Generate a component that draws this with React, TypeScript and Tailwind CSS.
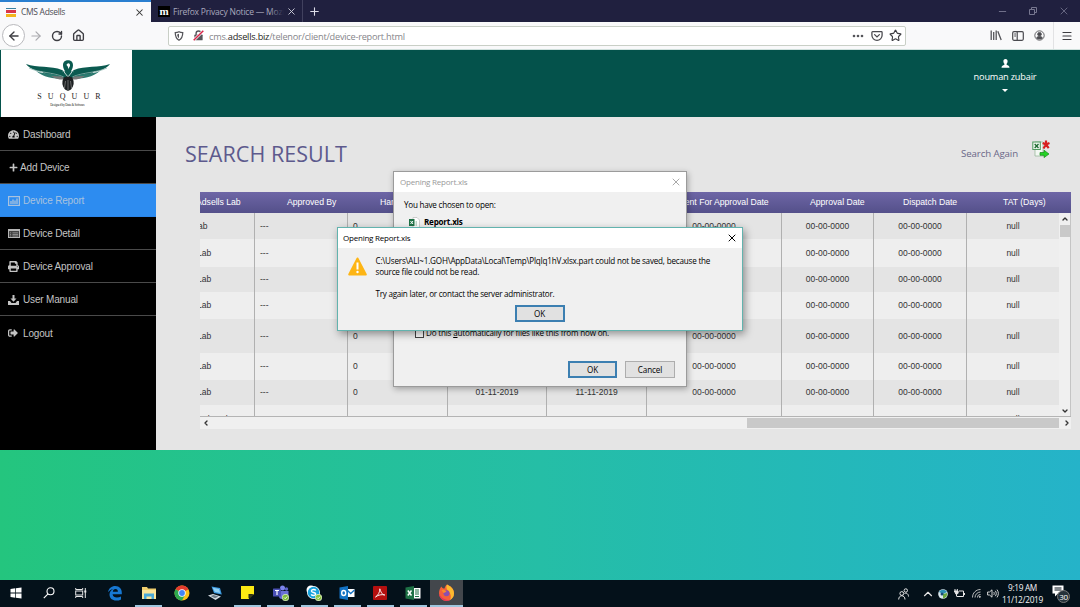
import React from "react";
import {
  ArrowLeft,
  ArrowRight,
  RotateCw,
  House,
  X,
  Plus,
  Star,
  Menu,
  Minus,
  ChevronUp,
  ChevronDown,
  ChevronLeft,
  ChevronRight,
} from "lucide-react";
import { FaTachometerAlt, FaPlus, FaSignOutAlt, FaPrint } from "react-icons/fa";

const arial = "font-['Liberation_Sans',Arial,sans-serif]";
const segoe = "font-['Open_Sans','Noto_Sans',sans-serif]";

/* ---------- Browser chrome ---------- */

function TabBar() {
  return (
    <div className="flex h-[22px] shrink-0 bg-[#20203f]">
      <div className="flex w-[151px] items-center border-t-2 border-[#2a7fd0] bg-[#f9f9fb] pl-[6px] pr-[6px]">
        <div className="flex h-[9px] w-[10px] flex-col gap-px">
          <span className="h-[2px] bg-[#3a7fa0]" />
          <span className="h-[3px] bg-[#d9364a]" />
          <span className="h-[3px] bg-[#f2b51c]" />
        </div>
        <span className="ml-[5px] mt-px flex-1 whitespace-nowrap text-[8.5px] tracking-[-0.32px] text-[#4c4c55]">CMS Adsells</span>
        <X className="size-[11px] text-[#333]" strokeWidth={2.2} />
      </div>
      <div className="flex w-[152px] items-center border-r border-[#41415e] pl-[7px] pr-[5px]">
        <span className="flex h-[11px] w-[12px] items-center justify-center bg-black font-['Liberation_Serif',serif] text-[11px] font-bold leading-[10px] text-white">m</span>
        <span className="relative ml-[3px] mt-[2px] w-[111px] overflow-hidden whitespace-nowrap text-[8.5px] tracking-[-0.2px] text-[#a9a9bd]">
          Firefox Privacy Notice — Mozil
          <span className="absolute right-0 top-0 h-full w-[14px] bg-linear-to-r from-transparent to-[#20203f]" />
        </span>
        <span className="flex-1" />
        <X className="size-[11px] text-[#d0d0dc]" strokeWidth={2} />
      </div>
      <div className="flex w-[22px] items-center justify-center">
        <Plus className="size-[13px] text-[#dddde8]" strokeWidth={2} />
      </div>
      <div className="ml-auto flex items-center gap-[21px] pr-[10px] text-[#777790]">
        <Minus className="size-[11px]" strokeWidth={2} />
        <svg className="size-[8px]" viewBox="0 0 8 8" fill="none" stroke="currentColor">
          <path d="M.5 2.500h5v5h-5zM2.500 2.500v-2h5v5h-2" />
        </svg>
        <X className="size-[12px]" strokeWidth={1.6} />
      </div>
    </div>
  );
}

function Toolbar() {
  return (
    <div className="flex h-[28px] shrink-0 items-center border-b border-[#cfe0dc] bg-[#f9f9fa] text-[#3d3d42]">
      <div className="ml-[2px] flex size-[23px] items-center justify-center rounded-full border border-[#b9b9bd] bg-white">
        <ArrowLeft className="size-[14px]" strokeWidth={2.3} />
      </div>
      <ArrowRight className="ml-[4px] size-[14px] text-[#aaaaae]" strokeWidth={2} />
      <RotateCw className="ml-[8px] size-[12px]" strokeWidth={2.8} />
      <House className="ml-[9px] size-[13px]" strokeWidth={2.5} />
      <div className="ml-[83px] flex h-[20px] w-[738px] items-center rounded-[2px] border border-[#c9cfc6] bg-white">
        <svg className="ml-[5px] size-[10px]" viewBox="0 0 16 16" fill="none" stroke="#55555a" strokeWidth="2">
          <path d="M8 1.2c2 1 4 1.3 6 1.3 0 6-1.500 10-6 12.300C3.500 12.500 2 8.500 2 2.500c2 0 4-.300 6-1.300z" />
          <path d="M8 4.500v7c-2-1.500-2.800-3.500-3-6z" fill="#55555a" stroke="none" />
        </svg>
        <svg className="ml-[9px] size-[11px]" viewBox="0 0 16 16" fill="none">
          <rect x="2" y="6.500" width="12" height="8.500" rx="1" fill="#55555a" />
          <path d="M4.500 7V5a3.500 3.500 0 0 1 7 0v2" stroke="#55555a" strokeWidth="2" />
          <path d="M1 15L15 1" stroke="#fff" strokeWidth="4" />
          <path d="M1 15L15 1" stroke="#d7264a" strokeWidth="2.200" />
        </svg>
        <span className="ml-[5px] mt-[2px] flex-1 whitespace-nowrap text-[9.2px] tracking-[-0.23px] text-[#85858a]">
          cms.<span className="text-[#1c1c20]">adsells.biz</span>/telenor/client/device-report.html
        </span>
        <svg className="h-[4px] w-[12px]" viewBox="0 0 12 4" fill="#55555a">
          <circle cx="2" cy="2" r="1.300" />
          <circle cx="6" cy="2" r="1.300" />
          <circle cx="10" cy="2" r="1.300" />
        </svg>
        <svg className="ml-[7px] size-[12px]" viewBox="0 0 16 16" fill="none" stroke="#4a4a4f" strokeWidth="1.700">
          <path d="M2.200 2.200h11.600a1 1 0 0 1 1 1V7a6.800 6.800 0 0 1-13.600 0V3.200a1 1 0 0 1 1-1z" />
          <path d="M4.800 6.200L8 9.300l3.200-3.100" strokeLinecap="round" />
        </svg>
        <Star className="ml-[6px] mr-[3px] size-[13px]" strokeWidth={2.1} />
      </div>
      <svg className="ml-[84px] h-[11px] w-[12px]" viewBox="0 0 12 11" fill="none" stroke="#55555a" strokeWidth="1.300">
        <path d="M1.200 .5v9.500M3.700 2v8M6.200 .5v9.500M7.800 1.200l3.400 8.800" />
      </svg>
      <svg className="ml-[10px] h-[10px] w-[12px]" viewBox="0 0 12 10" fill="none" stroke="#4a4a4f" strokeWidth="1.200">
        <rect x=".7" y=".7" width="10.600" height="8.600" rx="1.200" />
        <path d="M5.200 1v8M2.200 3h1.800M2.200 5h1.800" />
      </svg>
      <svg className="ml-[10px] size-[11px]" viewBox="0 0 12 12" fill="none" stroke="#55555a" strokeWidth="1">
        <circle cx="6" cy="6" r="5.100" />
        <circle cx="6" cy="4.600" r="2" fill="#4a4a4f" />
        <path d="M2.800 8.600c1-2 5.400-2 6.400 0C8 10.300 4 10.300 2.800 8.600z" fill="#4a4a4f" />
      </svg>
      <div className="ml-[8px] h-[27px] w-px bg-[#e2e2e4]" />
      <Menu className="ml-[7px] size-[12px]" strokeWidth={2.4} />
    </div>
  );
}

/* ---------- Page ---------- */

function Logo() {
  return (
    <div className="ml-px flex h-[67px] w-[131px] flex-col items-center bg-white pt-[10px]">
      <svg className="ml-[3px] h-[31px] w-[86px]" viewBox="0 0 86 31">
        <path d="M1 4C12 8 26 5.500 37 10l3 8C31 18 21 15.500 17 11.500 10 11 4 8 1 4z" fill="#0b5a50" />
        <path d="M85 4C74 8 60 5.500 49 10l-3 8c9 0 19-2.500 23-6.500C76 11 82 8 85 4z" fill="#0b5a50" />
        <path d="M4 8c11 5 23 4 35 9M82 8c-11 5-23 4-35 9" stroke="#8fb5af" strokeWidth=".8" fill="none" />
        <path d="M11 11c7 6 17 8 28 8-2-3-7-4-12-5-6-.500-12-1-16-3zM75 11c-7 6-17 8-28 8 2-3 7-4 12-5 6-.500 12-1 16-3z" fill="#2c7a70" />
        <path d="M26 16c5 3 9 4 14 3.500l-3-3zM60 16c-5 3-9 4-14 3.500l3-3z" fill="#777" />
        <path d="M43 .3c3.500 0 5 2.200 5 5 0 3-1.500 4.500-2 6.500l3-1.800-2 8h-8l-2-8 3 1.800c-.500-2-2-3.500-2-6.500 0-2.800 1.500-5 5-5z" fill="#0b5a50" />
        <path d="M38.300 9.500c.500 3 2.200 4 4.700 7.500 2.500-3.500 4.200-4.500 4.700-7.500" stroke="#fff" strokeWidth=".8" fill="none" />
        <path d="M43.300 3.200c1.300.3 1.900 1.200 1.700 2.400-.200 1.400-1.200 1.800-1.400 3.600-.500-1-.500-2-1-3-.600-.400-1-.800-1.100-1.500.500-.900 1-1.400 1.800-1.500z" fill="#fff" />
        <path d="M38.500 18c1-2 8-2 9 0 2 4 1.500 8-1.500 11.500L43 31l-3-1.500C37 26 36.500 22 38.500 18z" fill="#1d2022" />
        <path d="M43 20v11M40.500 21l-1 7M45.500 21l1 7" stroke="#8a8a8a" strokeWidth=".7" />
      </svg>
      <div className="ml-[11px] mt-[1px] font-['Liberation_Serif',serif] text-[8px] leading-[10px] tracking-[6.1px] text-[#222]">SUQUUR</div>
      <div className="ml-[2px] font-['Liberation_Serif',serif] text-[3.2px] leading-[6px] tracking-[-0.14px] text-[#222]">Designed by Data &amp; Software</div>
    </div>
  );
}

function Header() {
  return (
    <header className={`flex h-[67px] shrink-0 justify-between bg-[#04524b] ${segoe}`}>
      <Logo />
      <div className="mr-[43px] flex w-[64px] flex-col items-center pt-[9px] text-white">
        <svg className="h-[9px] w-[9px]" viewBox="0 0 9 9" fill="#fff">
          <path d="M4.500 0C6 0 6.700 1 6.600 2.500 6.500 3.700 6 4.400 5.600 4.800v1C7 6.400 8.500 6.800 8.500 8.800h-8c0-2 1.500-2.400 2.900-3v-1C3 4.400 2.500 3.700 2.400 2.500 2.300 1 3 0 4.500 0z" />
        </svg>
        <span className="mt-[2px] whitespace-nowrap text-[9.2px] leading-[13px] tracking-[-0.18px]">nouman zubair</span>
        <span className="mt-[6px] size-0 border-x-[3px] border-t-[3px] border-x-transparent border-t-white" />
      </div>
    </header>
  );
}

function ReportIcon() {
  return (
    <svg className="h-[10px] w-[12px]" viewBox="0 0 12 10" fill="none" stroke="#a9c2de" strokeWidth="1.200">
      <rect x=".6" y=".6" width="10.800" height="8.800" />
      <path d="M3 8V5M5 8V3.500M7 8V4.500M9 8V2.500" strokeWidth="1.300" />
    </svg>
  );
}

function DetailIcon() {
  return (
    <svg className="h-[9px] w-[12px]" viewBox="0 0 12 9" fill="none" stroke="#b5b5b5">
      <rect x=".5" y=".5" width="11" height="8" fill="#444" />
      <path d="M0 1h12" strokeWidth="2" />
      <path d="M2 3.800h1M2 5.500h1M2 7h1M4.500 3.800h5.500M4.500 5.500h5.500M4.500 7h5.500" strokeWidth=".6" />
    </svg>
  );
}

function ManualIcon() {
  return (
    <svg className="h-[10px] w-[11px]" viewBox="0 0 11 10" fill="#c4c4c4">
      <path d="M4.500 0h2v3.500h2L5.500 6.800 2.500 3.500h2z" />
      <path d="M0 6h2l1.500 2h4L9 6h2v4H0z" />
    </svg>
  );
}

const menu = [
  { label: "Dashboard", icon: <FaTachometerAlt className="size-[11px]" />, gap: "gap-[4px]" },
  { label: "Add Device", icon: <FaPlus className="size-[9px]" />, gap: "gap-[2px] pl-px" },
  { label: "Device Report", icon: <ReportIcon />, gap: "gap-[3px]", active: true },
  { label: "Device Detail", icon: <DetailIcon />, gap: "gap-[3px]" },
  { label: "Device Approval", icon: <FaPrint className="size-[11px]" />, gap: "gap-[4px]" },
  { label: "User Manual", icon: <ManualIcon />, gap: "gap-[4px]" },
  { label: "Logout", icon: <FaSignOutAlt className="size-[10px]" />, gap: "gap-[5px]", last: true },
];

function Sidebar() {
  return (
    <nav className={`w-[156px] shrink-0 bg-black pt-px ${arial} text-[10px] tracking-[-0.17px]`}>
      {menu.map((m) => (
        <div
          key={m.label}
          className={`flex h-[33px] items-center px-[8px] pt-px ${
            m.active
              ? "border-b border-[#2a85ea] bg-[#2d8cf0] text-[#a9c2de]"
              : m.last
                ? "text-[#c4c4c4]"
                : "border-b border-[#4a4a4a] text-[#c4c4c4]"
          }`}
        >
          <div className={`flex items-center ${m.gap}`}>
            {m.icon}
            <span className="whitespace-nowrap">{m.label}</span>
          </div>
        </div>
      ))}
    </nav>
  );
}

const rows = [
  { h: "h-[26px]", lab: "ab", shade: "bg-[#e4e4e4]", a: "01-11-2019", b: "11-11-2019" },
  { h: "h-[28px]", lab: "Lab", shade: "bg-[#eeeeee]", a: "01-11-2019", b: "11-11-2019" },
  { h: "h-[25px]", lab: "Lab", shade: "bg-[#e4e4e4]", a: "01-11-2019", b: "11-11-2019" },
  { h: "h-[27px]", lab: "Lab", shade: "bg-[#eeeeee]", a: "01-11-2019", b: "11-11-2019" },
  { h: "h-[34px]", lab: "Lab", shade: "bg-[#e4e4e4]", a: "01-11-2019", b: "11-11-2019" },
  { h: "h-[27px]", lab: "Lab", shade: "bg-[#eeeeee]", a: "01-11-2019", b: "11-11-2019" },
  { h: "h-[25px]", lab: "Lab", shade: "bg-[#e4e4e4]", a: "01-11-2019", b: "11-11-2019" },
  { h: "h-[28px]", lab: "Hub Hub", shade: "bg-[#eeeeee]", a: "04-11-2019", b: "00-00-0000" },
];

const cell = "flex shrink-0 items-center border-r border-[#b0b0b0]";

function ReportTable() {
  return (
    <div className={`ml-[44px] h-[237px] w-[871px] ${arial}`}>
      <div className="flex h-[21px] items-center overflow-hidden bg-linear-to-b from-[#6e66a6] to-[#54508a] pt-px text-[8.7px] tracking-[-0.03px] text-white">
        <span className="w-[54px] shrink-0 whitespace-nowrap">
          <span className="-ml-[4px]">Adsells Lab</span>
        </span>
        <span className="w-[115px] shrink-0 pl-[33px]">Approved By</span>
        <span className="w-[278px] shrink-0 pl-[11px]">Hardware Status</span>
        <span className="w-[134px] shrink-0 whitespace-nowrap pl-[32px]">Sent For Approval Date</span>
        <span className="w-[92px] shrink-0 whitespace-nowrap pl-[29px]">Approval Date</span>
        <span className="w-[94px] shrink-0 whitespace-nowrap pl-[30px]">Dispatch Date</span>
        <span className="flex-1 whitespace-nowrap pl-[36px]">TAT (Days)</span>
      </div>
      <div className="flex h-[204px] border-b border-[#b4b4b4]">
        <div className="w-[859px] overflow-hidden text-[8.5px] text-[#333]">
          {rows.map((r, i) => (
            <div key={i} className={`flex ${r.h} ${r.shade}`}>
              <div className={`${cell} w-[55px] overflow-hidden whitespace-nowrap`}>
                <span className={i === 0 ? "-ml-[2px]" : "-ml-[3px]"}>{r.lab}</span>
              </div>
              <div className={`${cell} w-[93px] pl-[5px]`}>---</div>
              <div className={`${cell} w-[100px] pl-[5px]`}>0</div>
              <div className={`${cell} w-[99px] justify-center`}>{r.a}</div>
              <div className={`${cell} w-[100px] justify-center`}>{r.b}</div>
              <div className={`${cell} w-[135px] justify-center`}>00-00-0000</div>
              <div className={`${cell} w-[92px] justify-center`}>00-00-0000</div>
              <div className={`${cell} w-[93px] justify-center`}>00-00-0000</div>
              <div className="flex flex-1 items-center justify-center">null</div>
            </div>
          ))}
        </div>
        <div className="flex flex-1 flex-col items-center border-r border-[#c4c4c4] bg-[#f0f0f0]">
          <ChevronUp className="mt-[2px] size-[8px] text-[#333]" strokeWidth={4} />
          <div className="mt-[2px] h-[12px] w-[10px] bg-[#c9c9c9]" />
          <ChevronDown className="mb-[1px] mt-auto size-[8px] text-[#333]" strokeWidth={4} />
        </div>
      </div>
      <div className="flex h-[12px] items-center bg-[#f0f0f0]">
        <ChevronLeft className="ml-[2px] size-[8px] text-[#333]" strokeWidth={4} />
        <div className="ml-auto h-[10px] w-[312px] bg-[#c9c9c9]" />
        <ChevronRight className="ml-[4px] size-[8px] text-[#333]" strokeWidth={4} />
      </div>
    </div>
  );
}

function ExportIcon() {
  return (
    <svg className="h-[18px] w-[18px]" viewBox="0 0 18 18">
      <path d="M3 2h8v14H3z" fill="#f3f8f3" stroke="#9ab89c" strokeWidth=".8" />
      <rect x=".8" y="2" width="7.500" height="7.500" fill="#eef7ee" stroke="#4d9a5e" strokeWidth="1" />
      <path d="M2.700 4l3.800 4M6.500 4L2.700 8" stroke="#1d6a31" strokeWidth="1.300" />
      <path d="M8 12.500h4v-2.300l5 3.800-5 3.600v-2.300H8z" fill="#25d325" stroke="#128a18" strokeWidth=".7" />
      <path d="M14 .5v4l-2.500 4M14 4.500l2.700 3.700M10.700 3l3.300 1.500 3.500-1.500" stroke="#d81f1f" strokeWidth="2.200" fill="none" />
    </svg>
  );
}

function Content() {
  return (
    <main className="flex flex-1 flex-col bg-[#e5e5e5]">
      <div className={`flex h-[75px] shrink-0 items-start justify-between pl-[29px] pr-[30px] ${segoe}`}>
        <h1 className="pt-[22px] text-[21.500px] leading-[30px] tracking-[0.05px] text-[#5d5a8d]">SEARCH RESULT</h1>
        <div className="flex pt-[23px]">
          <span className="mr-[14px] mt-[7px] text-[9.7px] leading-[14px] tracking-[-0.12px] text-[#6a6788]">Search Again</span>
          <ExportIcon />
        </div>
      </div>
      <ReportTable />
    </main>
  );
}

/* ---------- Dialogs ---------- */

function DialogButton({ label, primary, w }: { label: string; primary?: boolean; w: string }) {
  return (
    <button
      className={`flex h-[17px] ${w} items-center justify-center bg-[#e1e1e1] pt-px text-[8.1px] leading-none tracking-[-0.1px] text-black ${
        primary ? "border-2 border-[#3c7fb1]" : "border border-[#adadad]"
      }`}
    >
      {label}
    </button>
  );
}

function DownloadDialog() {
  return (
    <div className={`absolute left-[393px] top-[171px] flex h-[216px] w-[294px] flex-col border border-[#9b9b9b] bg-[#f0f0f0] shadow-[1px_2px_6px_rgba(0,0,0,0.3)] ${segoe}`}>
      <div className="flex h-[20px] items-center justify-between bg-white pl-[6px] pr-[4px] text-[8px] tracking-[-0.22px] text-[#999]">
        <span>Opening Report.xls</span>
        <X className="size-[12px]" strokeWidth={1.7} />
      </div>
      <div className="flex flex-col pl-[10px] text-[8.1px] tracking-[-0.23px] text-black">
        <span className="mt-[6px] leading-[13px]">You have chosen to open:</span>
        <div className="mt-[5px] flex h-[13px] items-center pl-[5px]">
          <svg className="h-[11px] w-[11px]" viewBox="0 0 11 11">
            <path d="M4 .5h4l2.500 2.500v7.500H4z" fill="#fff" stroke="#bbb" strokeWidth=".7" />
            <rect x="0" y="2" width="5.500" height="7" fill="#1e7145" />
            <path d="M1.500 4l2.500 3M4 4L1.500 7" stroke="#fff" strokeWidth="1" />
            <path d="M7.200 4v5" stroke="#8ab59a" strokeWidth=".8" />
          </svg>
          <span className="ml-[4px] font-bold">Report.xls</span>
        </div>
      </div>
      <div className="mt-[97px] flex h-[15px] items-center pl-[21px] text-[8.1px] tracking-[-0.19px] text-black">
        <span className="mr-[2px] size-[9px] border border-[#444] bg-white" />
        <span className="whitespace-nowrap">
          Do this <span className="underline">a</span>utomatically for files like this from now on.
        </span>
      </div>
      <div className="mt-auto flex justify-end gap-[8px] pb-[8px] pr-[11px]">
        <DialogButton label="OK" primary w="w-[49px]" />
        <DialogButton label="Cancel" w="w-[50px]" />
      </div>
    </div>
  );
}

function ErrorDialog() {
  return (
    <div className={`absolute left-[337px] top-[227px] flex h-[104px] w-[406px] flex-col border border-[#62b3ae] bg-[#f0f0f0] shadow-[2px_3px_8px_rgba(0,0,0,0.4)] ${segoe}`}>
      <div className="flex h-[20px] shrink-0 items-center justify-between bg-white pl-[5px] pr-[4px] text-[8px] tracking-[-0.22px] text-black">
        <span>Opening Report.xls</span>
        <X className="size-[12px]" strokeWidth={2} />
      </div>
      <div className="flex pl-[10px] pt-[7px]">
        <svg className="mt-[2px] h-[19px] w-[19px]" viewBox="0 0 19 19">
          <path d="M9.500 1.500L17.800 17.500H1.200z" fill="#fdb515" stroke="#fdb515" strokeWidth="2" strokeLinejoin="round" />
          <path d="M9.500 5.500v7" stroke="#fff" strokeWidth="2" />
          <circle cx="9.500" cy="15" r="1.200" fill="#fff" />
        </svg>
        <div className="ml-[8.5px] whitespace-nowrap text-[8.1px] leading-[11px] tracking-[-0.2px] text-black">
          <p>C:\Users\ALI~1.GOH\AppData\Local\Temp\PlqIq1hV.xlsx.part could not be saved, because the</p>
          <p>source file could not be read.</p>
          <p className="mt-[11px] tracking-[-0.25px]">Try again later, or contact the server administrator.</p>
        </div>
      </div>
      <div className="mt-auto flex justify-center pb-[8px] pr-px">
        <DialogButton label="OK" primary w="w-[50px]" />
      </div>
    </div>
  );
}

/* ---------- Taskbar ---------- */

const ic = "size-[16px]";

const apps: { name: string; w?: string; open?: boolean; active?: boolean; icon: React.ReactNode }[] = [
  {
    name: "start",
    w: "w-[32px]",
    icon: (
      <svg className="size-[12px]" viewBox="0 0 12 12" fill="#fff">
        <path d="M.5 2L5.200 1.300v4.300H.5zM5.900 1.200L11.500.4v5.200H5.900zM.5 6.400h4.700v4.300L.5 10zM5.900 6.400h5.600v5.200l-5.600-.8z" />
      </svg>
    ),
  },
  {
    name: "search",
    w: "w-[33px]",
    icon: (
      <svg className="size-[12px]" viewBox="0 0 12 12" fill="none" stroke="#fff" strokeWidth="1.100">
        <circle cx="7.500" cy="4.300" r="3.500" />
        <path d="M5 6.800L.8 11.200" />
      </svg>
    ),
  },
  {
    name: "taskview",
    w: "w-[32px]",
    icon: (
      <svg className="size-[12px]" viewBox="0 0 12 12" fill="none" stroke="#e8e8e8">
        <path d="M.7 1v1.500h7V1M.7 11V9.500h7V11M10.300 1v10" />
        <rect x=".7" y="4" width="7" height="4" />
        <path d="M9.300 4.500h2" strokeWidth="2" />
      </svg>
    ),
  },
  {
    name: "edge",
    w: "w-[35px]",
    icon: (
      <svg className={ic} viewBox="0 0 16 16" fill="#1778d2">
        <path d="M1 7.300C1.600 3.300 4.500 1 8.300 1c4.200 0 6.500 3 6.500 6.600v1.700H5.600c.2 2.300 2.200 3.200 4.300 3.200 1.500 0 2.900-.4 4.100-1.100v3c-1.300.8-3 1.200-4.800 1.200-4 0-6.700-2.300-6.700-6C2.500 7 4 5.200 6.200 4.300 3.800 4.600 2.200 5.700 1 7.300zm4.800-.6h5.100c0-1.700-.9-2.700-2.400-2.700S6 5.100 5.800 6.700z" />
      </svg>
    ),
  },
  {
    name: "explorer",
    open: true,
    icon: (
      <svg className={ic} viewBox="0 0 16 16">
        <path d="M1 2h5l1 1.500h8V14H1z" fill="#f0cf6e" />
        <path d="M1 5h14v9H1z" fill="#fbe49a" />
        <path d="M3 14V8.500h10V14h-2.500v-2.500h-5V14z" fill="#4ba9d8" />
      </svg>
    ),
  },
  {
    name: "chrome",
    icon: (
      <svg className={ic} viewBox="0 0 16 16">
        <circle cx="8" cy="8" r="7.500" fill="#fbc116" />
        <path d="M8 8L1.500 4.250A7.500 7.500 0 0 1 14.500 4.250z" fill="#e33b2e" />
        <path d="M8 8L1.500 4.250A7.500 7.500 0 0 0 8 15.500L11 10z" fill="#2da94f" />
        <circle cx="8" cy="8" r="3.700" fill="#fff" />
        <circle cx="8" cy="8" r="2.900" fill="#4285f4" />
      </svg>
    ),
  },
  {
    name: "remote",
    icon: (
      <svg className={ic} viewBox="0 0 16 16">
        <path d="M4.500 1.500L13 3l1.800 6.500L7 8z" fill="#3d9be0" />
        <path d="M5.800 2.800l6.200 1.200 1.200 4-5.500-1.200z" fill="#8fd0f5" />
        <path d="M1 10.500l5-1.500 8 2.500-5.500 3.500z" fill="#d5dde3" />
        <path d="M3.500 11l3-1 5 1.600-3.500 1.700z" fill="#6d7b86" />
      </svg>
    ),
  },
  {
    name: "notes",
    open: true,
    icon: (
      <svg className="size-[13px]" viewBox="0 0 13 13">
        <path d="M0 0h13v8.500H8V13H0z" fill="#fbe913" />
        <path d="M7.500 12.500V8H12z" fill="#20241a" />
        <path d="M12.800 8.500L8.500 13V8.500z" fill="#3a3c16" />
      </svg>
    ),
  },
  {
    name: "teams",
    open: true,
    icon: (
      <svg className={ic} viewBox="0 0 16 16">
        <circle cx="9.500" cy="3" r="2.500" fill="#7b83eb" />
        <circle cx="13.500" cy="4" r="1.700" fill="#5b62c9" />
        <path d="M6 6h9.500v5a3 3 0 0 1-3 3H9a3 3 0 0 1-3-3z" fill="#6a70d6" />
        <rect x="0" y="3.500" width="8" height="8" rx=".6" fill="#4a50b5" />
        <path d="M2 5.500h4M4 5.500V10" stroke="#fff" strokeWidth="1.200" />
        <circle cx="12.500" cy="12.500" r="3.500" fill="#d5ecb5" />
        <circle cx="12.500" cy="12.500" r="2.800" fill="#7fba3c" />
        <path d="M11 12.500l1.200 1.200 2-2.200" stroke="#fff" strokeWidth=".9" fill="none" />
      </svg>
    ),
  },
  {
    name: "skype",
    open: true,
    icon: (
      <svg className={ic} viewBox="0 0 16 16">
        <circle cx="5" cy="5" r="4.500" fill="#fff" />
        <circle cx="7.500" cy="7.500" r="6.500" fill="#fff" />
        <circle cx="7.500" cy="7.500" r="5.700" fill="#17a3dd" />
        <path d="M9.800 5.500C9 4 5.500 4 5.400 6c0 2 4.300 1 4.300 3 0 2-3.700 1.800-4.500.3" stroke="#fff" strokeWidth="1.400" fill="none" />
        <circle cx="12.500" cy="12.500" r="3.500" fill="#e2f3c5" />
        <circle cx="12.500" cy="12.500" r="2.800" fill="#8ac43e" />
        <path d="M11 12.500l1.200 1.200 2-2.200" stroke="#fff" strokeWidth=".9" fill="none" />
      </svg>
    ),
  },
  {
    name: "outlook",
    open: true,
    icon: (
      <svg className={ic} viewBox="0 0 16 16">
        <rect x="7" y="4" width="8.500" height="8" fill="#fff" />
        <path d="M8 5l3.700 3.500L15.500 5" stroke="#1272c4" strokeWidth="1.300" fill="none" />
        <path d="M.5 2.500L9 1v14L.5 13.500z" fill="#1272c4" />
        <ellipse cx="4.700" cy="8" rx="2" ry="2.500" stroke="#fff" strokeWidth="1.400" fill="none" />
      </svg>
    ),
  },
  {
    name: "acrobat",
    open: true,
    icon: (
      <svg className="size-[14px]" viewBox="0 0 14 14">
        <rect width="14" height="14" rx="1" fill="#b5100f" />
        <path d="M2.500 11C5 9.500 7 6 6.800 2.800c2 5.700 2.700 5.500 5 6.200-3-.8-6.500-.2-9.300 2z" stroke="#fff" strokeWidth=".9" fill="none" />
      </svg>
    ),
  },
  {
    name: "excel",
    open: true,
    icon: (
      <svg className={ic} viewBox="0 0 16 16">
        <rect x="8" y="3" width="7.500" height="10.500" fill="#fff" />
        <path d="M10 5h4M10 7h4M10 9h4M10 11.500h4" stroke="#1e7145" strokeWidth="1.200" />
        <path d="M.5 2.500L9 1v14L.5 13.500z" fill="#1e7145" />
        <path d="M2.800 5.500l3.700 5M6.500 5.500l-3.700 5" stroke="#fff" strokeWidth="1.400" />
      </svg>
    ),
  },
  {
    name: "firefox",
    open: true,
    active: true,
    icon: (
      <svg className="size-[17px]" viewBox="0 0 17 17">
        <path d="M9 .5c3.500 1.500 7.200 4.500 7 9a7.500 7.500 0 0 1-15 0C1 6.500 2 4 3.500 2.500 4 4 5 4.500 6.500 4.500 7 2.500 8 1.300 9 .5z" fill="#f4603a" />
        <path d="M9 .5c3.500 1.500 7.200 4.500 7 9a7.500 7.500 0 0 1-4 6.500c2-4 0-8-3-10.500C8 3.500 8.300 1.800 9 .5z" fill="#fcb92f" />
        <path d="M1 9.500a7.500 7.500 0 0 0 11 6.500c-5 .5-9-2-11-6.500z" fill="#e6325f" />
        <circle cx="8.500" cy="9.300" r="3" fill="#8a4fb0" />
        <path d="M3.500 6c2-.5 3.500 0 5 1.500-1 1-2 1-3 1.500z" fill="#f98a2b" />
      </svg>
    ),
  },
];

function Taskbar() {
  return (
    <footer className={`flex h-[27px] shrink-0 items-stretch bg-[#04111a] ${segoe}`}>
      {apps.map((a) => (
        <div
          key={a.name}
          className={`flex shrink-0 flex-col items-center ${a.w ?? "w-[33.1px]"} ${a.active ? "bg-[#43474c]" : ""}`}
        >
          <div className="flex flex-1 items-center justify-center">{a.icon}</div>
          <div className={`h-[2px] ${a.active ? "w-full bg-[#9fc6de]" : "w-[27px]"} ${a.open && !a.active ? "bg-[#9fc6de]" : ""}`} />
        </div>
      ))}
      <div className="ml-auto flex items-center">
        <svg className="h-[12px] w-[11px]" viewBox="0 0 11 12" fill="none" stroke="#e6e6e6">
          <circle cx="3.800" cy="5.500" r="1.900" />
          <path d="M.7 11.500C.7 6.500 7 6.500 7 11.500" />
          <circle cx="7.800" cy="2.500" r="1.700" />
          <path d="M6.500 5.500c2-1 4 .5 4 3" />
        </svg>
        <ChevronUp className="ml-[12px] size-[14px] text-[#e6e6e6]" strokeWidth={2} />
        <svg className="ml-[3px] size-[10px]" viewBox="0 0 10 10">
          <circle cx="5" cy="5" r="4.800" fill="#dbe9ee" />
          <path d="M1 3C3 0 7 0 9 3L5 5z" fill="#2b8fb5" />
          <path d="M5 5l4-1c.5 3-1 5-4 5.500z" fill="#68a83f" />
          <circle cx="4" cy="5" r="1.500" fill="#174a78" />
        </svg>
        <svg className="ml-[6px] h-[9px] w-[11px]" viewBox="0 0 11 9" fill="none" stroke="#e6e6e6">
          <path d="M5 2h4.500v5.500H3" />
          <path d="M10.500 4v2" />
          <path d="M1 0v2M3.300 0v2" />
          <path d="M.3 2h3.800v2.300L2.200 5.500z" fill="#e6e6e6" />
          <path d="M2.500 5v2.500" />
        </svg>
        <svg className="ml-[7px] size-[9px]" viewBox="0 0 9 9" fill="none" stroke="#cfcfcf" strokeWidth=".9">
          <path d="M.5 8.500C.5 4 4 .5 8.500.5M3 8.500C3 5.500 5.500 3 8.500 3M5.500 8.500c0-2 1-3 3-3" />
          <circle cx="7.800" cy="7.800" r=".6" fill="#fff" />
        </svg>
        <svg className="ml-[6px] h-[9px] w-[12px]" viewBox="0 0 12 9" fill="none" stroke="#e6e6e6" strokeWidth=".9">
          <path d="M.6 3h1.900L5 .8v7.400L2.500 6H.6z" />
          <path d="M6.700 3c.7 1 .7 2 0 3M8.300 1.800c1.300 1.700 1.300 3.700 0 5.400M10 .6c1.800 2.500 1.800 5.300 0 7.800" />
        </svg>
        <div className="ml-[3px] w-[41px] text-center text-[8.3px] leading-[12px] tracking-[-0.32px] text-[#f4f4f4]">
          <div className="whitespace-nowrap">9:19 AM</div>
          <div className="whitespace-nowrap">11/12/2019</div>
        </div>
        <div className="relative ml-[9px] mr-[10px] h-[17px] w-[18px]">
          <svg className="h-[12px] w-[12px]" viewBox="0 0 12 12" fill="#fff">
            <path d="M.5.5h11v8H6L3 11.500v-3H.5z" />
            <path d="M2.500 3h7M2.500 5h7" stroke="#04111a" />
          </svg>
          <span className="absolute -bottom-px right-0 flex size-[13px] items-center justify-center rounded-full border border-[#777] bg-[#26323a] text-[8px] leading-none tracking-[-0.3px] text-white">30</span>
        </div>
      </div>
    </footer>
  );
}

export default function App() {
  return (
    <div className={`relative flex h-[607px] w-[1080px] flex-col overflow-hidden ${segoe}`}>
      <TabBar />
      <Toolbar />
      <Header />
      <div className="flex h-[333px] shrink-0">
        <Sidebar />
        <Content />
      </div>
      <div className="flex-1 bg-linear-to-r from-[#24c57e] via-[#25bea6] to-[#25b3c9]" />
      <Taskbar />
      <DownloadDialog />
      <ErrorDialog />
    </div>
  );
}
